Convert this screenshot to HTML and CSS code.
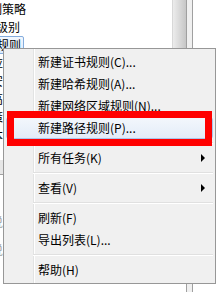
FILE: index.html
```html
<!DOCTYPE html>
<html>
<head>
<meta charset="utf-8">
<link rel="stylesheet" href="styles.css">
</head>
<body>
<div class="window">
  <div class="left">
    <div class="treepane">
      <div class="tree">
        <div class="row parent"><span class="txt">软件限制策略</span></div>
        <div class="row child"><span class="txt">安全级别</span></div>
        <div class="row child"><span class="txt sel">其他规则</span></div>
        <div class="row cut"><span class="txt">应用程序控制策略</span></div>
        <div class="row cut"><span class="txt">安全策略</span></div>
        <div class="row cut"><span class="txt">高级审核</span></div>
        <div class="row cut"><span class="txt">策略配置</span></div>
        <div class="row cut"><span class="txt">本地计算机</span></div>
      </div>
      <div class="vscroll"><div class="thumb"></div></div>
    </div>
    <div class="hscroll"></div>
    <div class="lower">
      <div class="lrow"><span class="gtxt">说明文字</span></div>
      <div class="lrow"><span class="gtxt">说明文字</span></div>
    </div>
  </div>
  <div class="splitter"></div>
  <div class="right"></div>
</div>

<div class="menu">
  <div class="item">新建证书规则(C)...</div>
  <div class="item">新建哈希规则(A)...</div>
  <div class="item">新建网络区域规则(N)...</div>
  <div class="item hl">新建路径规则(P)...</div>
  <div class="sep"></div>
  <div class="item">所有任务(K)<span class="arrow"></span></div>
  <div class="sep"></div>
  <div class="item">查看(V)<span class="arrow"></span></div>
  <div class="sep"></div>
  <div class="item">刷新(F)</div>
  <div class="item">导出列表(L)...</div>
  <div class="sep"></div>
  <div class="item">帮助(H)</div>
</div>

<div class="mark"></div>
</body>
</html>
```

FILE: styles.css
```css
html, body {
  margin: 0;
  padding: 0;
}
body {
  width: 217px;
  height: 292px;
  overflow: hidden;
  position: relative;
  background: #ffffff;
  font-family: "Noto Sans CJK SC", "Microsoft YaHei", sans-serif;
  font-size: 12px;
  color: #000;
}
.window {
  display: flex;
  height: 292px;
}
.left {
  width: 186px;
  display: flex;
  flex-direction: column;
}
.treepane {
  display: flex;
  height: 160px;
}
.tree {
  flex: 1;
  overflow: hidden;
}
.row {
  height: 18px;
  display: flex;
  align-items: center;
  white-space: nowrap;
}
.parent .txt { margin-left: -46px; }
.child .txt { margin-left: -28px; }
.cut .txt { margin-left: -9px; }
.txt {
  line-height: 16px;
  padding: 0 3px 0 0;
}
.sel {
  border: 1px solid #84acdd;
  border-radius: 2px;
  background: linear-gradient(to bottom, #f2f7fe, #dcebfc);
  padding: 0 2px 0 0;
  height: 16px;
}
.vscroll {
  width: 14px;
  background: #ececec;
}
.thumb {
  height: 90px;
  box-sizing: border-box;
  border-left: 1px solid #d8d8d8;
  background: linear-gradient(to right, #ececec, #c6c6c6);
}
.hscroll {
  height: 14px;
  background: #e6e6e6;
  border-bottom: 1px solid #a0a0a0;
}
.lower {
  padding-top: 37px;
  display: flex;
  flex-direction: column;
  gap: 10px;
}
.lrow {
  height: 18px;
  display: flex;
  align-items: center;
  white-space: nowrap;
}
.gtxt {
  margin-left: -9px;
  color: #a0a0a0;
}
.splitter {
  width: 5px;
  background: #f0f0f0;
  border-left: 1px solid #a0a0a0;
  border-right: 1px solid #a0a0a0;
}
.right {
  flex: 1;
  background: #ffffff;
}

.menu {
  position: absolute;
  left: 3px;
  top: 48px;
  width: 213px;
  height: 236px;
  box-sizing: border-box;
  border: 1px solid #979797;
  padding: 2px;
  background-color: #f0f0f0;
  background-image: linear-gradient(to right, transparent 29px, #e2e3e3 29px, #e2e3e3 30px, #ffffff 30px, #ffffff 31px, transparent 31px);
  white-space: nowrap;
}
.item {
  height: 22px;
  box-sizing: border-box;
  display: flex;
  align-items: center;
  padding-left: 32px;
  line-height: 16px;
}
.item.hl {
  border: 1px solid #a8c5ec;
  border-radius: 3px;
  padding-left: 31px;
  background: linear-gradient(to bottom, #f3f7fc, #e3ecf8);
}
.arrow {
  margin-left: auto;
  margin-right: 8px;
  width: 0;
  height: 0;
  border-left: 4px solid #000;
  border-top: 4px solid transparent;
  border-bottom: 4px solid transparent;
}
.sep {
  height: 0;
  margin: 3px 0 3px 27px;
  border-top: 1px solid #e0e0e0;
  border-bottom: 1px solid #ffffff;
}
.mark {
  position: absolute;
  left: 7px;
  top: 111px;
  width: 205px;
  height: 35px;
  box-sizing: border-box;
  border: 7px solid #ff0000;
}
```
